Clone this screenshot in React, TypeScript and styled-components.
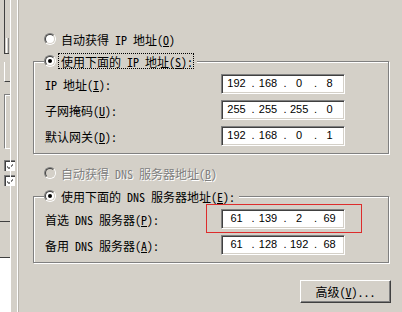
import React from 'react';
import styled, { createGlobalStyle } from 'styled-components';

const GlobalStyle = createGlobalStyle`
  html, body {
    margin: 0;
    padding: 0;
    background: #d4d0c8;
  }
  body {
    width: 402px;
    height: 312px;
    overflow: hidden;
    font-family: "Noto Sans Mono CJK SC", "Noto Sans CJK SC", monospace;
    font-size: 12px;
    color: #000;
  }
`;

const Screen = styled.div`
  display: flex;
  width: 402px;
  height: 312px;
  background: #d4d0c8;
  overflow: hidden;
`;

/* ---------- cut-off window on the left ---------- */
const Strip = styled.div`
  display: flex;
  flex: none;
  width: 19px;
  height: 100%;
`;

const Behind = styled.div`
  display: flex;
  flex-direction: column;
  flex: none;
  width: 10px;
  height: 100%;
`;

const Edge = styled.div<{ $c: string }>`
  flex: none;
  width: 1px;
  height: 100%;
  background: ${(p) => p.$c};
`;

const EdgeGap = styled.div`
  flex: none;
  width: 6px;
`;

const ListEdge = styled.div`
  box-sizing: border-box;
  height: 54px;
  margin-left: 4px;
  width: 5px;
  border-left: 1px solid #404040;
  border-bottom: 1px solid #404040;
  display: flex;
  justify-content: flex-end;
  align-items: flex-end;
`;

const ListThumb = styled.div`
  box-sizing: border-box;
  width: 3px;
  height: 15px;
  border-left: 1px solid #fff;
  border-right: 1px solid #808080;
`;

const FieldEdge = styled.div`
  box-sizing: border-box;
  height: 20px;
  margin: 8px 0 0 4px;
  border-left: 1px solid #fff;
  border-bottom: 1px solid #404040;
`;

const PanelEdge = styled.div`
  box-sizing: border-box;
  height: 55px;
  margin: 12px 0 0 4px;
  border-top: 1px solid #808080;
  border-left: 1px solid #808080;
  border-bottom: 1px solid #fff;
  box-shadow: inset 1px 1px 0 #fff;
`;

const MiniCheck = styled.div<{ $mt: number }>`
  box-sizing: border-box;
  width: 11px;
  height: 11px;
  margin: ${(p) => p.$mt}px 0 0 4px;
  background: #fff;
  border-top: 1px solid #808080;
  border-left: 1px solid #808080;
  box-shadow: inset 1px 1px 0 #404040;
  display: flex;
  align-items: center;
  padding-left: 2px;
`;

const Rule = styled.div<{ $mt: number }>`
  height: 1px;
  margin-top: ${(p) => p.$mt}px;
  background: #404040;
`;

const WhiteArea = styled.div`
  flex: 1;
  background: #fff;
`;

/* ---------- main dialog area ---------- */
const Main = styled.div`
  display: flex;
  flex-direction: column;
  flex: none;
  width: 372px;
  box-sizing: border-box;
  padding-top: 31px;
`;

const OptionRow = styled.div<{ $mt?: number; $disabled?: boolean }>`
  display: flex;
  align-items: center;
  gap: 5px;
  height: 16px;
  margin: ${(p) => p.$mt ?? 0}px 0 0 25px;
  white-space: pre;
  color: ${(p) => (p.$disabled ? '#808080' : '#000')};
  text-shadow: ${(p) => (p.$disabled ? '1px 1px 0 #fff' : 'none')};
`;

const RadioOuter = styled.span`
  flex: none;
  box-sizing: border-box;
  width: 12px;
  height: 12px;
  border-radius: 50%;
  border: 1px solid;
  border-color: #808080 #fff #fff #808080;
  display: flex;
  align-items: center;
  justify-content: center;
`;

const RadioInner = styled.span<{ $checked?: boolean; $disabled?: boolean }>`
  box-sizing: border-box;
  width: 10px;
  height: 10px;
  border-radius: 50%;
  border: 1px solid;
  border-color: #404040 #d4d0c8 #d4d0c8 #404040;
  background: ${(p) => (p.$disabled ? '#d4d0c8' : '#fff')};
  display: flex;
  align-items: center;
  justify-content: center;
  &::after {
    content: '';
    width: 4px;
    height: 4px;
    border-radius: 50%;
    background: #000;
    display: ${(p) => (p.$checked ? 'block' : 'none')};
  }
`;

const Group = styled.div<{ $mt: number }>`
  display: flex;
  flex-direction: column;
  gap: 6px;
  box-sizing: border-box;
  width: 356px;
  margin: ${(p) => p.$mt}px 0 0 14px;
  padding: 0 0 7px 11px;
  border: 1px solid #808080;
  box-shadow: inset 1px 1px 0 #fff, 1px 1px 0 #fff;
`;

const Legend = styled.div`
  display: flex;
  align-items: center;
  gap: 2px;
  align-self: flex-start;
  height: 16px;
  margin: -9px 0 -1px -1px;
  padding-right: 3px;
  background: #d4d0c8;
`;

const LegendLabel = styled.span<{ $focus?: boolean }>`
  box-sizing: border-box;
  height: 16px;
  display: flex;
  align-items: center;
  padding-left: 2px;
  white-space: pre;
  border: 1px ${(p) => (p.$focus ? 'dotted #000' : 'solid transparent')};
  border-left-width: 1px;
`;

const FieldRow = styled.div`
  display: grid;
  grid-template-columns: 176px 124px;
  align-items: center;
  height: 20px;
`;

const FieldLabel = styled.span`
  white-space: pre;
`;

const Key = styled.span`
  text-decoration: underline;
  text-underline-offset: 1px;
`;

const IpBox = styled.div`
  position: relative;
  box-sizing: border-box;
  width: 124px;
  height: 20px;
  padding-left: 1px;
  background: #fff;
  border: 1px solid;
  border-color: #808080 #fff #fff #808080;
  box-shadow: inset 1px 1px 0 #404040, inset -1px -1px 0 #d4d0c8;
  display: grid;
  grid-template-columns: 27px 6px 24px 10px 18px 15px 13px;
  align-content: start;
  font-family: "Liberation Sans", Arial, sans-serif;
  font-size: 11px;
  line-height: 16px;
`;

const Octet = styled.span`
  text-align: center;
  white-space: nowrap;
`;

const Dot = styled.span`
  text-align: center;
`;

const Highlight = styled.div`
  position: absolute;
  top: -6px;
  left: -16px;
  right: -18px;
  bottom: -5px;
  border: 1px solid #dd2c2c;
  pointer-events: none;
`;

const AdvancedButton = styled.button`
  align-self: flex-end;
  margin-top: 17px;
  box-sizing: border-box;
  width: 91px;
  height: 23px;
  padding: 0;
  background: #d4d0c8;
  color: #000;
  font-family: inherit;
  font-size: 12px;
  border: 1px solid;
  border-color: #fff #404040 #404040 #fff;
  box-shadow: inset -1px -1px 0 #808080;
  display: flex;
  align-items: center;
  justify-content: center;
  white-space: pre;
`;

const Radio = ({ checked, disabled }: { checked?: boolean; disabled?: boolean }) => (
  <RadioOuter>
    <RadioInner $checked={checked} $disabled={disabled} />
  </RadioOuter>
);

const IpField = ({ value, highlighted }: { value: string[]; highlighted?: boolean }) => (
  <IpBox>
    <Octet>{value[0]}</Octet>
    <Dot>.</Dot>
    <Octet>{value[1]}</Octet>
    <Dot>.</Dot>
    <Octet>{value[2]}</Octet>
    <Dot>.</Dot>
    <Octet>{value[3]}</Octet>
    {highlighted && <Highlight />}
  </IpBox>
);

const Check = () => (
  <svg width="7" height="7" viewBox="0 0 7 7">
    <path d="M0 3 L2 5 L6 1 L6 2 L2 6 L0 4 Z" fill="#000" />
  </svg>
);

export default function App() {
  return (
    <>
      <GlobalStyle />
      <Screen>
        <Strip>
          <Behind>
            <ListEdge>
              <ListThumb />
            </ListEdge>
            <FieldEdge />
            <PanelEdge />
            <MiniCheck $mt={11}>
              <Check />
            </MiniCheck>
            <MiniCheck $mt={4}>
              <Check />
            </MiniCheck>
            <Rule $mt={35} />
            <Rule $mt={35} />
            <WhiteArea />
          </Behind>
          <Edge $c="#fff" />
          <EdgeGap />
          <Edge $c="#fff" />
          <Edge $c="#b8b4ac" />
        </Strip>

        <Main>
          <OptionRow>
            <Radio />
            <span>
              自动获得 IP 地址(<Key>O</Key>)
            </span>
          </OptionRow>

          <Group $mt={14}>
            <Legend>
              <Radio checked />
              <LegendLabel $focus>
                使用下面的 IP 地址(<Key>S</Key>):
              </LegendLabel>
            </Legend>
            <FieldRow>
              <FieldLabel>
                IP 地址(<Key>I</Key>):
              </FieldLabel>
              <IpField value={['192', '168', '0', '8']} />
            </FieldRow>
            <FieldRow>
              <FieldLabel>
                子网掩码(<Key>U</Key>):
              </FieldLabel>
              <IpField value={['255', '255', '255', '0']} />
            </FieldRow>
            <FieldRow>
              <FieldLabel>
                默认网关(<Key>D</Key>):
              </FieldLabel>
              <IpField value={['192', '168', '0', '1']} />
            </FieldRow>
          </Group>

          <OptionRow $mt={11} $disabled>
            <Radio disabled />
            <span>
              自动获得 DNS 服务器地址(<Key>B</Key>)
            </span>
          </OptionRow>

          <Group $mt={15}>
            <Legend>
              <Radio checked />
              <LegendLabel>
                使用下面的 DNS 服务器地址(<Key>E</Key>):
              </LegendLabel>
            </Legend>
            <FieldRow>
              <FieldLabel>
                首选 DNS 服务器(<Key>P</Key>):
              </FieldLabel>
              <IpField value={['61', '139', '2', '69']} highlighted />
            </FieldRow>
            <FieldRow>
              <FieldLabel>
                备用 DNS 服务器(<Key>A</Key>):
              </FieldLabel>
              <IpField value={['61', '128', '192', '68']} />
            </FieldRow>
          </Group>

          <AdvancedButton>
            高级(<Key>V</Key>)...
          </AdvancedButton>
        </Main>
      </Screen>
    </>
  );
}
